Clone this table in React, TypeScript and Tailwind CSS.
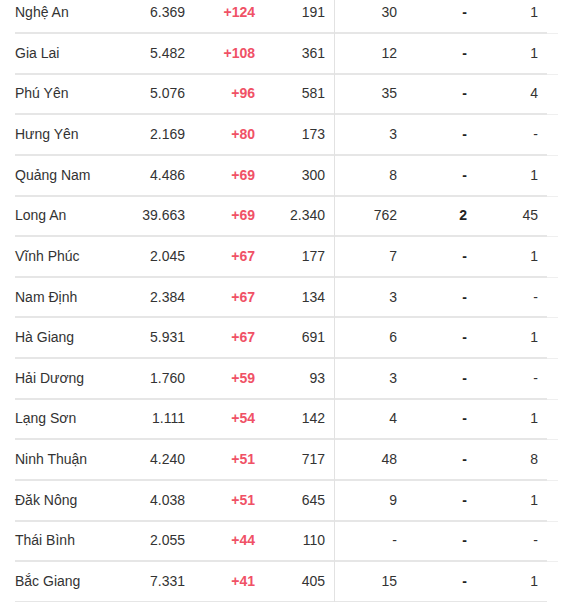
const rows: [string, string, string, string, string, string, string][] = [
  ["Nghệ An", "6.369", "+124", "191", "30", "-", "1"],
  ["Gia Lai", "5.482", "+108", "361", "12", "-", "1"],
  ["Phú Yên", "5.076", "+96", "581", "35", "-", "4"],
  ["Hưng Yên", "2.169", "+80", "173", "3", "-", "-"],
  ["Quảng Nam", "4.486", "+69", "300", "8", "-", "1"],
  ["Long An", "39.663", "+69", "2.340", "762", "2", "45"],
  ["Vĩnh Phúc", "2.045", "+67", "177", "7", "-", "1"],
  ["Nam Định", "2.384", "+67", "134", "3", "-", "-"],
  ["Hà Giang", "5.931", "+67", "691", "6", "-", "1"],
  ["Hải Dương", "1.760", "+59", "93", "3", "-", "-"],
  ["Lạng Sơn", "1.111", "+54", "142", "4", "-", "1"],
  ["Ninh Thuận", "4.240", "+51", "717", "48", "-", "8"],
  ["Đăk Nông", "4.038", "+51", "645", "9", "-", "1"],
  ["Thái Bình", "2.055", "+44", "110", "-", "-", "-"],
  ["Bắc Giang", "7.331", "+41", "405", "15", "-", "1"],
];

export default function App() {
  return (
    <div
      className="relative h-[602px] w-[565px] overflow-hidden bg-white text-[14px] text-[#333333]"
      style={{ fontFamily: '"Liberation Sans", Arial, sans-serif' }}
    >
      <div className="mt-[-6.6px] pl-[15px]">
        {rows.map((r) => (
          <div key={r[0]} className="flex">
            <div className="grid h-[40.64px] w-[532px] grid-cols-[105px_65px_70px_79px_63px_70px_80px] items-center border-b-2 border-[#e6e6e6]">
              <div>{r[0]}</div>
              <div className="text-right">{r[1]}</div>
              <div className="text-right font-bold text-[#f05166]">{r[2]}</div>
              <div className="pr-[9px] text-right">{r[3]}</div>
              <div className="text-right">{r[4]}</div>
              <div className="text-right font-bold text-[#222]">{r[5]}</div>
              <div className="pr-[9px] text-right">{r[6]}</div>
            </div>
            <div className="h-[40.64px] w-[11px] border-b border-[#efefef]" />
          </div>
        ))}
      </div>
      <div className="absolute top-0 bottom-0 left-[334px] w-px bg-[#e2e2e2]" />
    </div>
  );
}
